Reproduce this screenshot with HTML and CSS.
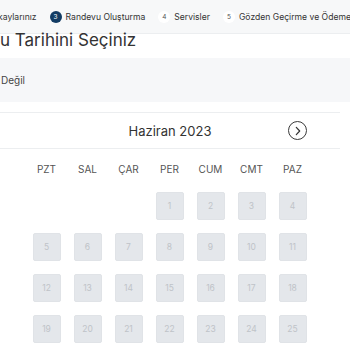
FILE: index.html
```html
<!DOCTYPE html>
<html lang="tr">
<head>
<meta charset="utf-8">
<link rel="stylesheet" href="styles.css">
</head>
<body>
<div class="stepper">
  <div class="step first">kaylarınız</div>
  <div class="step active"><span class="step-num">3</span><span>Randevu Oluşturma</span></div>
  <div class="step"><span class="step-num">4</span><span>Servisler</span></div>
  <div class="step"><span class="step-num">5</span><span>Gözden Geçirme ve Ödeme</span></div>
</div>
<h1 class="title">Randevu Tarihini Seçiniz</h1>
<div class="info">Değil</div>
<div class="calendar">
  <div class="cal-head">
    <div class="month">Haziran 2023</div>
    <button class="next" type="button" aria-label="Sonraki ay">
      <svg width="8" height="10" viewBox="0 0 8 10"><path d="M2.3 1.4 L5.7 5 L2.3 8.6" fill="none" stroke="#333" stroke-width="1.2" stroke-linecap="round" stroke-linejoin="round"/></svg>
    </button>
  </div>
  <div class="weekdays">
    <span>PZT</span><span>SAL</span><span>ÇAR</span><span>PER</span><span>CUM</span><span>CMT</span><span>PAZ</span>
  </div>
  <div class="days">
    <span class="empty"></span><span class="empty"></span><span class="empty"></span>
    <span class="day">1</span><span class="day">2</span><span class="day">3</span><span class="day">4</span>
    <span class="day">5</span><span class="day">6</span><span class="day">7</span><span class="day">8</span><span class="day">9</span><span class="day">10</span><span class="day">11</span>
    <span class="day">12</span><span class="day">13</span><span class="day">14</span><span class="day">15</span><span class="day">16</span><span class="day">17</span><span class="day">18</span>
    <span class="day">19</span><span class="day">20</span><span class="day">21</span><span class="day">22</span><span class="day">23</span><span class="day">24</span><span class="day">25</span>
  </div>
</div>
</body>
</html>
```
FILE: styles.css
```css
html, body {
  margin: 0;
  padding: 0;
}
body {
  width: 350px;
  height: 350px;
  overflow: hidden;
  background: #fff;
  font-family: Inter, "Noto Sans", sans-serif;
  color: #333;
}
.stepper {
  height: 33px;
  background: #f7f8f9;
  border-bottom: 1px solid #eceef0;
  display: flex;
  align-items: center;
  gap: 13px;
  white-space: nowrap;
  font-size: 8.6px;
  color: #333;
}
.step {
  display: flex;
  align-items: center;
  gap: 4px;
  flex-shrink: 0;
}
.step.first {
  margin-left: -2px;
}
.step-num {
  width: 12px;
  height: 12px;
  border-radius: 50%;
  background: #fff;
  color: #555;
  font-size: 6.5px;
  display: flex;
  align-items: center;
  justify-content: center;
}
.step.active .step-num {
  background: #123c64;
  color: #fff;
}
.title {
  margin: -6px 0 0 -60px;
  font-size: 17px;
  line-height: 24px;
  font-weight: 400;
  color: #333;
  white-space: nowrap;
}
.info {
  margin-top: 6px;
  height: 44px;
  background: #f6f7f9;
  display: flex;
  align-items: center;
  font-size: 10px;
  color: #444;
  padding-left: 1px;
}
.calendar {
  margin-top: 10px;
  width: 340px;
  border-top: 1px solid #eceef0;
}
.cal-head {
  height: 35px;
  border-bottom: 1px solid #eceef0;
  display: grid;
  grid-template-columns: 1fr auto 1fr;
  align-items: center;
}
.month {
  grid-column: 2;
  font-size: 13px;
  color: #333;
  padding-top: 1px;
}
.next {
  grid-column: 3;
  justify-self: end;
  margin-right: 33px;
  width: 19px;
  height: 19px;
  padding: 0;
  border: 1.2px solid #3a3a3a;
  border-radius: 50%;
  background: #fff;
  display: flex;
  align-items: center;
  justify-content: center;
}
.weekdays {
  margin-left: 26px;
  padding-top: 14px;
  display: grid;
  grid-template-columns: repeat(7, 41px);
  font-size: 10px;
  line-height: 12px;
  color: #555;
  height: 29px;
}
.weekdays span {
  text-align: center;
}
.days {
  margin-left: 26px;
  display: grid;
  grid-template-columns: repeat(7, 41px);
  grid-auto-rows: 28px;
  row-gap: 13px;
  justify-items: center;
}
.day {
  width: 28px;
  height: 28px;
  box-sizing: border-box;
  border: 1px solid #e0e3e7;
  border-radius: 2px;
  background: #e4e7eb;
  color: #bfc3c8;
  font-size: 8.5px;
  display: flex;
  align-items: center;
  justify-content: center;
}
```
